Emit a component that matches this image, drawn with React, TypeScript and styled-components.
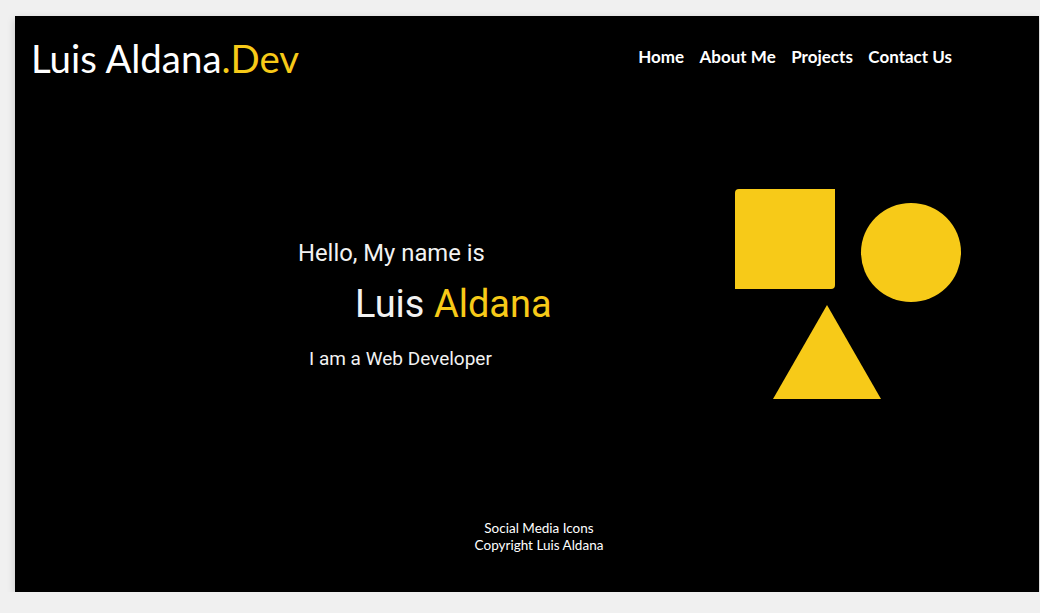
import React from "react";
import styled, { createGlobalStyle } from "styled-components";

const GlobalStyle = createGlobalStyle`
  html, body {
    margin: 0;
    padding: 0;
    background: #f0f0f0;
  }
  body {
    font-family: "Lato", "Liberation Sans", sans-serif;
  }
`;

const YELLOW = "#f7ca18";

const Frame = styled.div`
  margin: 16px 0 0 15px;
  width: 1024px;
  height: 576px;
  background: #000;
  box-shadow: 0 3px 8px rgba(0, 0, 0, 0.18);
  display: flex;
  flex-direction: column;
  box-sizing: border-box;
`;

const Header = styled.header`
  display: flex;
  justify-content: space-between;
  align-items: flex-start;
  padding: 19px 87px 0 16px;
  height: 75px;
  box-sizing: border-box;
`;

const Logo = styled.div`
  font-family: "Lato", sans-serif;
  font-size: 38.4px;
  font-weight: 400;
  color: #fff;
  line-height: normal;
`;

const Accent = styled.span`
  color: ${YELLOW};
`;

const Nav = styled.nav`
  display: flex;
  gap: 15.5px;
  margin-top: 11px;
`;

const NavLink = styled.a`
  font-family: "Lato", sans-serif;
  font-weight: 700;
  font-size: 17px;
  color: #fff;
  text-decoration: none;
  line-height: normal;
`;

const Main = styled.main`
  display: flex;
  align-items: flex-start;
  padding-top: 98px;
`;

const TextBlock = styled.div`
  box-sizing: border-box;
  flex: 0 0 720px;
  padding-left: 283px;
  margin-top: 50px;
  font-family: "Roboto", sans-serif;
  color: #f2f2f2;
  white-space: nowrap;
`;

const Line = styled.div<{ $size: number; $lh: number; $indent: number; $gap: number }>`
  font-size: ${(p) => p.$size}px;
  line-height: ${(p) => p.$lh}px;
  margin-left: ${(p) => p.$indent}px;
  margin-top: ${(p) => p.$gap}px;
`;

const Shapes = styled.div`
  flex: 0 0 241px;
  display: flex;
  flex-wrap: wrap;
  align-items: flex-start;
`;

const Square = styled.div`
  width: 100px;
  height: 100px;
  background: ${YELLOW};
  border-radius: 4px 0 4px 0;
`;

const Circle = styled.div`
  width: 100px;
  height: 99px;
  border-radius: 50%;
  background: ${YELLOW};
  margin: 14px 0 0 26px;
`;

const TriangleWrap = styled.div`
  margin: 3px 0 0 38px;
  width: 108px;
  height: 94px;
  display: flex;
`;

const Footer = styled.footer`
  margin-top: auto;
  padding: 0 0 38px 24px;
  text-align: center;
  font-family: "Lato", sans-serif;
  font-size: 13.5px;
  line-height: 17px;
  color: #fff;
`;

export default function App() {
  return (
    <>
      <GlobalStyle />
      <Frame>
        <Header>
          <Logo>
            Luis Aldana<Accent>.Dev</Accent>
          </Logo>
          <Nav>
            <NavLink href="#">Home</NavLink>
            <NavLink href="#">About Me</NavLink>
            <NavLink href="#">Projects</NavLink>
            <NavLink href="#">Contact Us</NavLink>
          </Nav>
        </Header>
        <Main>
          <TextBlock>
            <Line $size={23.8} $lh={28} $indent={0} $gap={0}>
              Hello, My name is
            </Line>
            <Line $size={38} $lh={44} $indent={57} $gap={15}>
              Luis <Accent>Aldana</Accent>
            </Line>
            <Line $size={19} $lh={22} $indent={11} $gap={22}>
              I am a Web Developer
            </Line>
          </TextBlock>
          <Shapes>
            <Square />
            <Circle />
            <TriangleWrap>
              <svg width="108" height="94" viewBox="0 0 108 94">
                <polygon points="54,0 108,94 0,94" fill={YELLOW} />
              </svg>
            </TriangleWrap>
          </Shapes>
        </Main>
        <Footer>
          <div>Social Media Icons</div>
          <div>Copyright Luis Aldana</div>
        </Footer>
      </Frame>
    </>
  );
}
